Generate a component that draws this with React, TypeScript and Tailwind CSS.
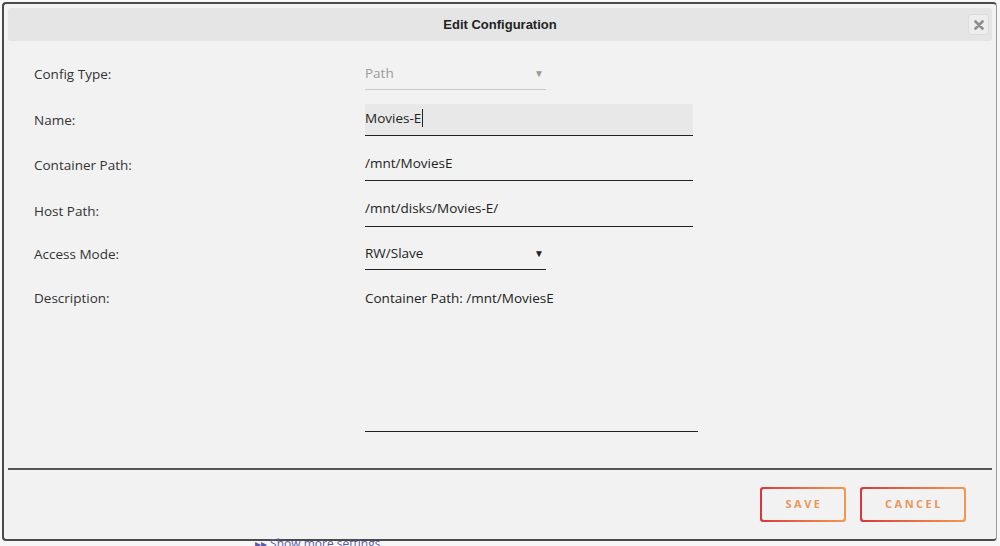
import React from "react";

const font = { fontFamily: '"Open Sans", "Noto Sans", sans-serif' };

function Label({ children }: { children: React.ReactNode }) {
  return (
    <div className="w-[361px] shrink-0 pl-[30px] h-[32px] flex items-center text-[13.5px] text-[#333]">
      {children}
    </div>
  );
}

export default function App() {
  return (
    <div className="w-[1000px] h-[546px] overflow-hidden bg-[#f7f7f7] relative" style={font}>
      <div className="ml-[2px] mr-[3px] mt-[2px] h-[539px] rounded-[4px] border-2 border-[#4a4a4a] border-r-[#9a9a9a] border-r bg-[#f2f2f2] flex flex-col">
        {/* Title bar */}
        <div className="mx-[4px] mt-[4px] h-[33px] rounded-[3px] bg-[#e5e5e5] relative flex items-center justify-center">
          <span className="text-[13px] font-bold text-[#222]" style={{ fontFamily: '"Liberation Sans", sans-serif' }}>
            Edit Configuration
          </span>
          <div className="absolute right-[3px] top-[6px] w-[21px] h-[21px] rounded-[3px] bg-[#ededed] border border-[#dcdcdc] flex items-center justify-center">
            <svg width="10" height="10" viewBox="0 0 10 10">
              <path d="M1.5 1.5 L8.5 8.5 M8.5 1.5 L1.5 8.5" stroke="#8c8c8c" strokeWidth="2.6" strokeLinecap="round" />
            </svg>
          </div>
        </div>

        {/* Form */}
        <div className="flex flex-col pt-[17px]">
          <div className="flex">
            <Label>Config Type:</Label>
            <div className="w-[181px] h-[32px] border-b border-[#c8c8c8] flex items-center justify-between pr-[2px] text-[13.5px] text-[#9a9a9a]">
              <span>Path</span>
              <span className="text-[10px] text-[#999]">▼</span>
            </div>
          </div>
          <div className="flex mt-[14px]">
            <Label>Name:</Label>
            <div className="w-[328px] h-[32px] bg-[#e8e8e8] border-b border-[#222] flex items-center pb-[3px] text-[13.5px] text-[#222]">
              <span>Movies-E</span>
              <span className="inline-block w-[1px] h-[18px] bg-[#222] ml-[1px]" />
            </div>
          </div>
          <div className="flex mt-[13px]">
            <Label>Container Path:</Label>
            <div className="w-[328px] h-[32px] border-b border-[#222] flex items-center pb-[3px] text-[13.5px] text-[#222]">
              /mnt/MoviesE
            </div>
          </div>
          <div className="flex mt-[14px]">
            <Label>Host Path:</Label>
            <div className="w-[328px] h-[32px] border-b border-[#222] flex items-center pb-[4px] text-[13.5px] text-[#222]">
              /mnt/disks/Movies-E/
            </div>
          </div>
          <div className="flex mt-[11px]">
            <Label>Access Mode:</Label>
            <div className="w-[181px] h-[32px] border-b border-[#222] flex items-center justify-between pr-[2px] pb-[1px] text-[13.5px] text-[#222]">
              <span>RW/Slave</span>
              <span className="text-[10px] text-[#222]">▼</span>
            </div>
          </div>
          <div className="flex mt-[12px]">
            <Label>Description:</Label>
            <div className="w-[333px] h-[150px] border-b border-[#222] pt-[6px] text-[13.5px] text-[#222]">
              Container Path: /mnt/MoviesE
            </div>
          </div>
        </div>

        {/* Separator */}
        <div className="mx-[4px] mt-[36px] h-[2px] bg-[#555]" />

        {/* Buttons */}
        <div className="flex justify-end gap-[14px] pr-[30px] mt-[17px]">
          <div className="w-[86px] h-[35px] p-[2px] rounded-[3px] bg-linear-to-r from-[#d9353a] to-[#f39850]">
            <div className="w-full h-full rounded-[2px] bg-[#f2f2f2] flex items-center justify-center">
              <span className="text-[11px] font-bold tracking-[2.5px] pl-[2px] text-[#ec955a]">SAVE</span>
            </div>
          </div>
          <div className="w-[106px] h-[35px] p-[2px] rounded-[3px] bg-linear-to-r from-[#d9353a] to-[#f39850]">
            <div className="w-full h-full rounded-[2px] bg-[#f2f2f2] flex items-center justify-center">
              <span className="text-[11px] font-bold tracking-[2.5px] pl-[2px] text-[#ec955a]">CANCEL</span>
            </div>
          </div>
        </div>
      </div>
      <div className="absolute left-[255px] top-[538px] text-[12px] text-[#5a5aa8] leading-none">
        ▸▸ Show more settings
      </div>
    </div>
  );
}
